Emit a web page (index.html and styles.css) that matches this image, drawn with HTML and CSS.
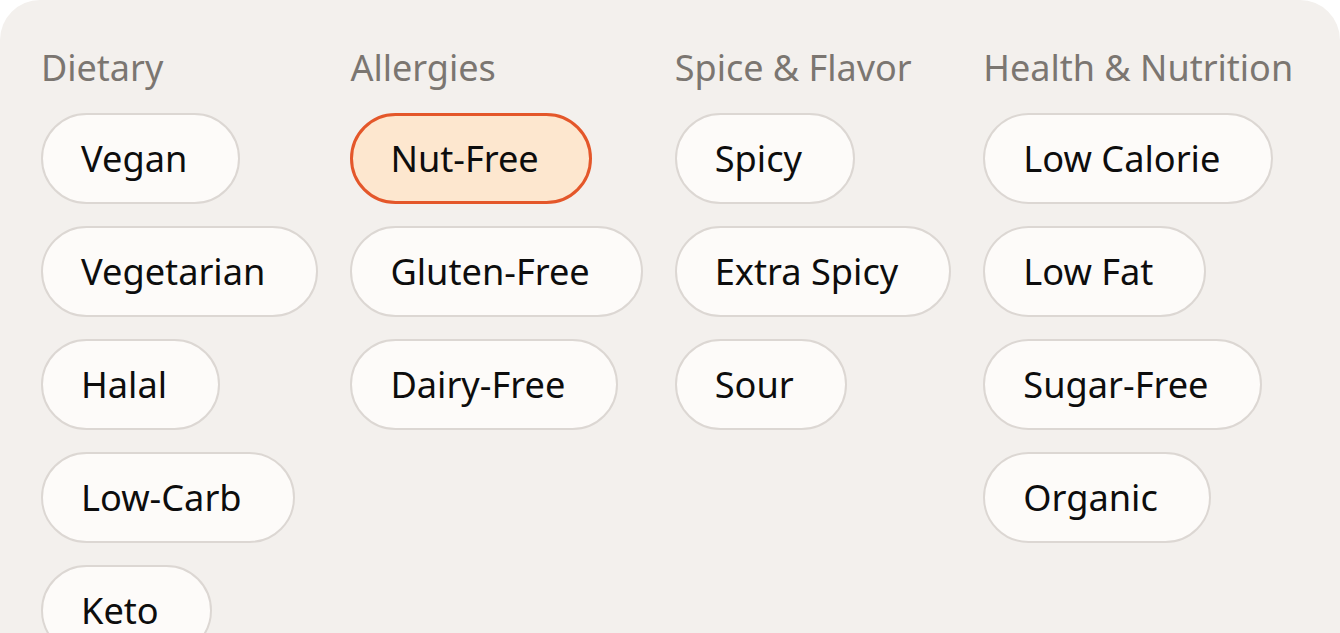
FILE: index.html
```html
<!DOCTYPE html>
<html lang="en">
<head>
  <meta charset="UTF-8">
  <title>Preferences</title>
  <link rel="stylesheet" href="styles.css">
</head>
<body>
  <div class="panel">
    <div class="group">
      <h2 class="group-title">Dietary</h2>
      <button class="tag">Vegan</button>
      <button class="tag">Vegetarian</button>
      <button class="tag">Halal</button>
      <button class="tag">Low-Carb</button>
      <button class="tag">Keto</button>
    </div>
    <div class="group">
      <h2 class="group-title">Allergies</h2>
      <button class="tag selected">Nut-Free</button>
      <button class="tag">Gluten-Free</button>
      <button class="tag">Dairy-Free</button>
    </div>
    <div class="group">
      <h2 class="group-title">Spice &amp; Flavor</h2>
      <button class="tag">Spicy</button>
      <button class="tag">Extra Spicy</button>
      <button class="tag">Sour</button>
    </div>
    <div class="group">
      <h2 class="group-title">Health &amp; Nutrition</h2>
      <button class="tag">Low Calorie</button>
      <button class="tag">Low Fat</button>
      <button class="tag">Sugar-Free</button>
      <button class="tag">Organic</button>
    </div>
  </div>
</body>
</html>
```

FILE: styles.css
```css
html, body {
  margin: 0;
  padding: 0;
  background: #fff;
  font-family: "Noto Sans", "Open Sans", sans-serif;
  overflow: hidden;
}

.panel {
  background: #f3f0ed;
  border-radius: 40px 40px 0 0;
  padding: 43px 41px 0 41px;
  height: 633px;
  box-sizing: border-box;
  display: flex;
  align-items: flex-start;
  gap: 32px;
}

.group {
  flex-shrink: 0;
  display: flex;
  flex-direction: column;
  align-items: flex-start;
  gap: 22px;
}

.group-title {
  margin: 0 0 -1px;
  font-size: 36px;
  font-weight: 400;
  line-height: 49px;
  color: #7b7671;
  white-space: nowrap;
}

.tag {
  flex-shrink: 0;
  height: 91px;
  box-sizing: border-box;
  padding: 0 51px 0 38px;
  border: 2px solid #dcd7d3;
  border-radius: 999px;
  background: #fdfbf9;
  color: #0d0d0d;
  font-family: inherit;
  font-size: 36.2px;
  line-height: 49px;
  white-space: nowrap;
  cursor: pointer;
}

.tag.selected {
  background: #fde7cf;
  border: 3px solid #e4572a;
  padding: 0 50px 0 37px;
}
```
